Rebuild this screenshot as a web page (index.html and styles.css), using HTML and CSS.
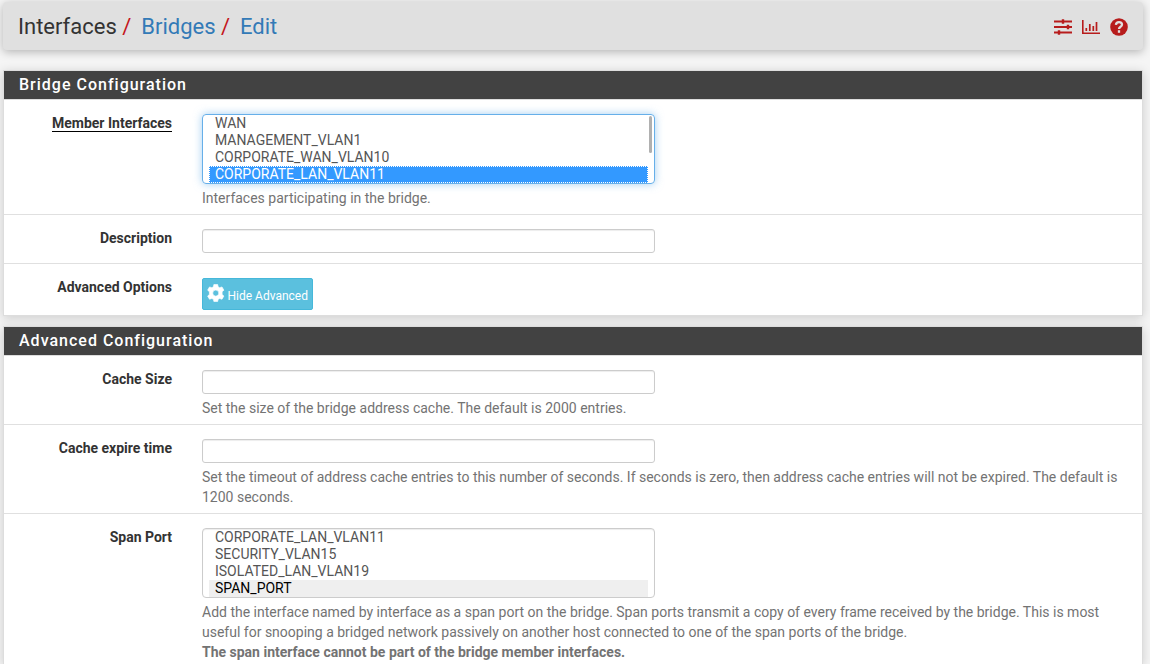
FILE: index.html
```html
<!DOCTYPE html>
<html lang="en">
<head>
<meta charset="utf-8">
<title>Interfaces: Bridges: Edit</title>
<link rel="stylesheet" href="styles.css">
</head>
<body>
<header class="header">
  <nav class="crumbs"><span>Interfaces</span><i class="slash">/</i><a>Bridges</a><i class="slash">/</i><a>Edit</a></nav>
  <div class="tools">
    <svg width="18" height="16" viewBox="0 0 18 16"><path d="M0 2.500h18M0 8h18M0 13.500h18" stroke-width="1.900"/><path d="M9 .3v4.400M14 5.800v4.400M5 11.300v4.400" stroke-width="2.400"/></svg>
    <svg width="18" height="16" viewBox="0 0 18 16"><path d="M.8 1v13.200H18" stroke-width="1.600"/><path d="M4.300 9v3M7.800 5v7M11.300 7v5M14.500 3v9" stroke-width="1.700"/></svg>
    <svg width="18" height="18" viewBox="0 0 18 18"><circle cx="9" cy="9" r="8.800" class="disc"/><path d="M5.900 6.900C6.200 3 12.100 3.300 12 6.700 11.900 8.900 9 8.500 9 10.900" class="mark"/><path d="M9 12.200v2.600" class="mark"/></svg>
  </div>
</header>
<section class="panel first">
  <h2>Bridge Configuration</h2>
  <div class="row members">
    <label><span class="required">Member Interfaces</span></label>
    <div class="field">
      <div class="list focused">
        <div>WAN</div><div>MANAGEMENT_VLAN1</div><div>CORPORATE_WAN_VLAN10</div><div class="chosen">CORPORATE_LAN_VLAN11</div>
        <span class="thumb"></span>
      </div>
      <p>Interfaces participating in the bridge.</p>
    </div>
  </div>
  <div class="row description">
    <label>Description</label>
    <div class="field"><input type="text"></div>
  </div>
  <div class="row options">
    <label>Advanced Options</label>
    <div class="field">
      <button type="button"><svg width="18" height="18" viewBox="0.6 0.300 16.800 17"><path fill="#fff" stroke="#fff" stroke-width=".6" stroke-linejoin="round" fill-rule="evenodd" d="M7.200 .6h3.600l.5 2.300 1.400.8 2.300-.7 1.800 3.100-1.700 1.500v2.600l1.700 1.500-1.800 3.100-2.300-.7-1.400.8-.5 2.100H7.200l-.5-2.100-1.400-.8-2.300.7-1.800-3.100 1.700-1.500V7.600L1.200 6.100 3 3l2.300.7 1.400-.8zM9 6a2.900 2.900 0 1 0 0 5.800A2.900 2.900 0 0 0 9 6z"/></svg><span>Hide Advanced</span></button>
    </div>
  </div>
</section>
<section class="panel last">
  <h2>Advanced Configuration</h2>
  <div class="row size">
    <label>Cache Size</label>
    <div class="field"><input type="text"><p>Set the size of the bridge address cache. The default is 2000 entries.</p></div>
  </div>
  <div class="row expire">
    <label>Cache expire time</label>
    <div class="field"><input type="text"><p>Set the timeout of address cache entries to this number of seconds. If seconds is zero, then address cache entries will not be expired. The default is<br>1200 seconds.</p></div>
  </div>
  <div class="row span">
    <label>Span Port</label>
    <div class="field">
      <div class="list">
        <div>CORPORATE_LAN_VLAN11</div><div>SECURITY_VLAN15</div><div>ISOLATED_LAN_VLAN19</div><div class="picked">SPAN_PORT</div>
      </div>
      <p>Add the interface named by interface as a span port on the bridge. Span ports transmit a copy of every frame received by the bridge. This is most<br>useful for snooping a bridged network passively on another host connected to one of the span ports of the bridge.<br><b>The span interface cannot be part of the bridge member interfaces.</b></p>
    </div>
  </div>
</section>
</body>
</html>
```
FILE: styles.css
```css
* { box-sizing: border-box; }
html { height: 100%; overflow: hidden; }
body {
  margin: 0;
  height: 664px;
  overflow: hidden;
  padding: 2px 7px 0 3px;
  background: #f5f5f5;
  font: 14px/20px Roboto, sans-serif;
  color: #333;
}
.header {
  display: flex;
  justify-content: space-between;
  height: 48px;
  padding: 0 15px;
  background: #e0e0e0;
  border-radius: 4px;
  box-shadow: 0 2px 10px rgba(0, 0, 0, .27);
}
.crumbs { display: flex; font-size: 22px; line-height: 49px; color: #333; }
.crumbs a { color: #337ab7; }
.slash { color: #c4161c; font-style: normal; width: 24.5px; padding-left: 5.5px; }
.tools { display: flex; align-items: center; gap: 10px; padding-top: 2px; }
.tools svg { fill: none; stroke: #b71c1c; }
.tools .disc { fill: #b71c1c; stroke: none; }
.tools .mark { stroke: #e0e0e0; stroke-width: 2.3; }
.panel {
  margin-top: 10px;
  background: #fff;
  border: 1px solid #ddd;
  box-shadow: 0 2px 10px rgba(0, 0, 0, .17);
}
.first { margin-top: 20px; }
.last { border-bottom: 0; }
.panel h2 {
  margin: 0;
  height: 29px;
  padding-left: 15px;
  background: #424242;
  border-bottom: 1px solid #ddd;
  color: #fff;
  font-size: 16px;
  font-weight: 500;
  line-height: 28px;
  letter-spacing: 1px;
}
.row { display: flex; border-bottom: 1px solid #e0e0e0; padding-top: 14px; }
.row:last-child { border-bottom: 0; }
.row label { width: 168px; text-align: right; font-weight: 700; line-height: 20px; margin-top: -1px; }
.field { width: 940px; margin-left: 30px; }
.field p { margin: 4px 0 0; color: #737373; white-space: nowrap; }
.members { height: 115px; }
.description { height: 49px; }
.options { height: 51px; }
.size { height: 69px; }
.expire { height: 89px; }
.span { height: 150px; }
.required { display: inline-block; line-height: 16px; border-bottom: 1px solid #000; }
.field input {
  display: block;
  width: 453px;
  height: 24px;
  border: 1px solid #ccc;
  border-radius: 3px;
  background: #fff;
  box-shadow: inset 0 1px 1px rgba(0, 0, 0, .075);
}
.list {
  position: relative;
  width: 453px;
  height: 70px;
  padding: 0 6px;
  border: 1px solid #ccc;
  border-radius: 4px;
  box-shadow: inset 0 1px 1px rgba(0, 0, 0, .075);
  color: #555;
  line-height: 17px;
}
.list > div { height: 17px; padding-left: 6px; }
.focused { border-color: #66afe9; box-shadow: 0 0 8px rgba(102, 175, 233, .6); }
.list .chosen { background: #3399ff; color: #fff; outline: 1px dotted #fff; outline-offset: -1px; }
.list .picked { background: #efefef; color: #000; }
.thumb { position: absolute; right: 2px; top: 1px; width: 3px; height: 37px; border-radius: 2px; background: #b0b0b0; }
button {
  display: flex;
  width: 111px;
  height: 32px;
  padding: 5px 4px 0 4px;
  border: 1px solid #46b8da;
  border-radius: 2px;
  background: #5bc0de;
  color: #fff;
  font: 12px/24px Roboto, sans-serif;
  white-space: nowrap;
}
button span { margin-left: 3px; }
```
